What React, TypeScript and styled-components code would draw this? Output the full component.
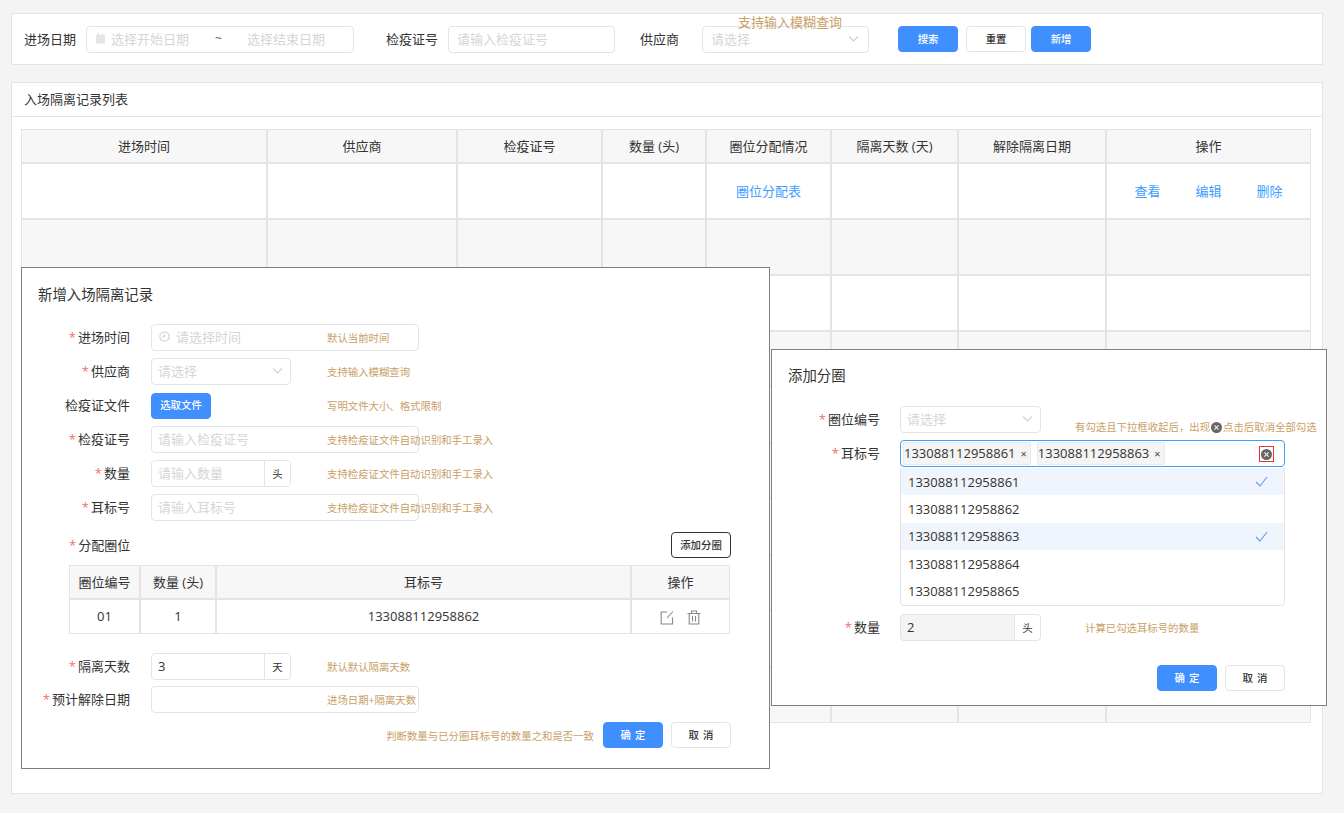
import styled, { createGlobalStyle } from "styled-components";

const GlobalStyle = createGlobalStyle`
    html, body {
        margin: 0;
        padding: 0;
        background: #f4f4f4;
    }
    * {
        box-sizing: border-box;
    }
    body {
        font-family: "Open Sans", "Noto Sans CJK SC", sans-serif;
        font-size: 13px;
        color: #333;
    }
`;

const BLUE = "#3f8fff";
const LINE = "#e4e4e4";
const HINT = "#c9a066";
const GHOST = "#d6d6d6";

const Page = styled.div`
    position: relative;
    height: 813px;
    overflow: hidden;
    padding: 13px 21px 0 11px;
`;

const FilterGroup = styled.div<{ $ml?: number }>`
    display: flex;
    align-items: center;
    gap: 10px;
    margin-left: ${(p) => p.$ml ?? 0}px;
`;

const FilterLabel = styled.span`
    padding-bottom: 2px;
    white-space: nowrap;
`;

const Box = styled.div<{ $w?: number; $disabled?: boolean; $focus?: boolean }>`
    position: relative;
    display: flex;
    align-items: center;
    flex: none;
    width: ${(p) => (p.$w ? `${p.$w}px` : "100%")};
    height: 27px;
    padding: 0 6px 2px;
    background: ${(p) => (p.$disabled ? "#f4f4f4" : "#fff")};
    border: 1px solid ${(p) => (p.$focus ? "#409eff" : LINE)};
    border-radius: 4px;
`;

const FilterCard = styled.div`
    display: flex;
    align-items: center;
    height: 52px;
    padding-left: 12px;
    background: #fff;
    border: 1px solid ${LINE};

    ${Box} {
        padding: 0 8px 2px;
    }
`;

const Placeholder = styled.span`
    color: ${GHOST};
    white-space: nowrap;
`;

const RangeText = styled(Placeholder)<{ $w: number }>`
    width: ${(p) => p.$w}px;
`;

const Tilde = styled.span`
    width: 32px;
    color: #666;
    font-size: 12px;
`;

const Chevron = styled.svg`
    margin-left: auto;
    margin-right: 1px;
    flex: none;
    width: 11px;
    height: 11px;
    fill: none;
    stroke: #d0d0d0;
    stroke-width: 1.1;
`;

const GhostIcon = styled.svg<{ $clock?: boolean }>`
    flex: none;
    width: 11px;
    height: 11px;
    margin: 0 ${(p) => (p.$clock ? 6 : 5)}px 0 ${(p) => (p.$clock ? 1 : 0)}px;
    fill: none;
    stroke: #d6d6d6;
    stroke-width: 1.2;
`;

const TopHint = styled.span`
    position: absolute;
    left: 35px;
    top: -15px;
    color: ${HINT};
    white-space: nowrap;
`;

const Buttons = styled.div`
    display: flex;
    margin-left: 29px;
`;

const Button = styled.button<{ $primary?: boolean; $dark?: boolean; $ml?: number }>`
    flex: none;
    width: 60px;
    height: 26px;
    margin-left: ${(p) => p.$ml ?? 0}px;
    padding: 0 0 2px;
    font: inherit;
    font-size: 10.4px;
    font-weight: 500;
    color: ${(p) => (p.$primary ? "#fff" : "#333")};
    background: ${(p) => (p.$primary ? BLUE : "#fff")};
    border: 1px solid ${(p) => (p.$primary ? BLUE : p.$dark ? "#333" : LINE)};
    border-radius: 4px;
`;

const ListCard = styled.div`
    height: 712px;
    margin-top: 17px;
    background: #fff;
    border: 1px solid ${LINE};
`;

const ListTitle = styled.div`
    height: 34px;
    padding-left: 12px;
    line-height: 33px;
    border-bottom: 1px solid ${LINE};
`;

const ListBody = styled.div`
    padding: 12px 11px 0 9px;
`;

const Table = styled.table`
    width: 100%;
    table-layout: fixed;
    border-collapse: separate;
    border-spacing: 0;
`;

const Th = styled.th`
    height: 34px;
    padding: 0 0 2px;
    font-weight: 400;
    text-align: center;
    background: #f7f7f7;
    border: 1px solid ${LINE};
`;

const Td = styled.td<{ $grey?: boolean; $h?: number }>`
    height: ${(p) => p.$h ?? 56}px;
    padding: 0 0 1px;
    text-align: center;
    background: ${(p) => (p.$grey ? "#f7f7f7" : "#fff")};
    border: 1px solid ${LINE};
`;

const Link = styled.span`
    color: #409eff;
`;

const LinkRow = styled.div`
    display: flex;
    justify-content: center;
    gap: 35px;
`;

const Modal = styled.div<{ $x: number; $y: number; $w: number; $h: number; $pt: number }>`
    position: absolute;
    left: ${(p) => p.$x}px;
    top: ${(p) => p.$y}px;
    width: ${(p) => p.$w}px;
    height: ${(p) => p.$h}px;
    padding-top: ${(p) => p.$pt}px;
    background: #fff;
    border: 1px solid #7f7f7f;
`;

const ModalTitle = styled.div<{ $mb: number }>`
    height: 20px;
    margin: 0 0 ${(p) => p.$mb}px 16px;
    font-size: 14.4px;
    line-height: 20px;
`;

const Field = styled.div<{ $gap?: number; $cg?: number }>`
    display: grid;
    grid-template-columns: 108px 1fr;
    column-gap: ${(p) => p.$cg ?? 21}px;
    align-items: center;
    min-height: 27px;
    margin-bottom: ${(p) => p.$gap ?? 7}px;
`;

const Label = styled.label`
    grid-area: 1 / 1;
    padding-bottom: 2px;
    text-align: right;
    white-space: nowrap;
`;

const Star = styled.span`
    margin-right: 2px;
    color: #f56c6c;
`;

const Control = styled.div`
    grid-area: 1 / 2;
    display: flex;
    align-items: center;
`;

const Hint = styled.span<{ $left?: number; $end?: boolean }>`
    grid-area: 1 / 2;
    display: flex;
    align-items: center;
    align-self: ${(p) => (p.$end ? "end" : "center")};
    margin-left: ${(p) => p.$left ?? 176}px;
    font-size: 10.4px;
    line-height: 12px;
    color: ${HINT};
    white-space: nowrap;
    z-index: 1;
`;

const Addon = styled.span`
    position: absolute;
    right: 0;
    top: 0;
    bottom: 0;
    display: flex;
    align-items: center;
    justify-content: center;
    width: 26px;
    padding-bottom: 1px;
    font-size: 10.4px;
    background: #fff;
    border-left: 1px solid ${LINE};
    border-radius: 0 4px 4px 0;
`;

const SectionHead = styled.div`
    display: flex;
    align-items: center;
    justify-content: space-between;
    margin: 11px 38px 7px 47px;
`;

const SectionLabel = styled.span`
    width: 61px;
    padding-bottom: 2px;
    white-space: nowrap;
`;

const SubTableWrap = styled.div`
    margin: 0 39px 19px 47px;
`;

const OpIcons = styled.div`
    display: flex;
    justify-content: center;
    gap: 13px;
    margin: 2px 0 0;
`;

const OpIcon = styled.svg`
    width: 14px;
    height: 15px;
    fill: none;
    stroke: #888;
    stroke-width: 1.1;
`;

const Footer = styled.div<{ $mr: number; $mt: number }>`
    display: flex;
    align-items: center;
    justify-content: flex-end;
    gap: 8px;
    margin: ${(p) => p.$mt}px ${(p) => p.$mr}px 0 0;
`;

const FooterHint = styled.span`
    margin-right: 1px;
    font-size: 10.4px;
    color: ${HINT};
    white-space: nowrap;
`;

const SpacedButton = styled(Button)`
    letter-spacing: 4px;
    text-indent: 4px;
`;

const TagBox = styled(Box)`
    gap: 6px;
    padding: 0 2px;
`;

const Tag = styled.span`
    display: flex;
    align-items: center;
    height: 23px;
    padding: 0 3px 1px 0;
    background: #f4f4f4;
    border: 1px solid #e9e9e9;
    border-radius: 2px;
    white-space: nowrap;
`;

const TagClose = styled.span`
    margin-left: 5px;
    font-size: 11px;
    color: #444;
`;

const ClearWrap = styled.span`
    position: absolute;
    right: 10px;
    top: 5px;
    display: flex;
    align-items: center;
    justify-content: center;
    width: 15px;
    height: 16px;
    border: 1px solid #e33;
`;

const ClearIcon = styled.svg`
    flex: none;
    width: 11px;
    height: 11px;
    margin: 0 1px;
`;

const Dropdown = styled.div`
    width: 385px;
    height: 138px;
    margin: -6px 0 8px 128px;
    background: #fff;
    border: 1px solid ${LINE};
    border-top: 0;
    border-radius: 0 0 4px 4px;
`;

const Option = styled.div<{ $on?: boolean }>`
    display: flex;
    align-items: center;
    justify-content: space-between;
    height: 27.3px;
    padding: 0 16px 0 7px;
    background: ${(p) => (p.$on ? "#f0f4fc" : "#fff")};
`;

const Check = styled.svg`
    width: 13px;
    height: 11px;
    fill: none;
    stroke: #5b9bf0;
    stroke-width: 1.1;
`;

const calendarIcon = (
    <GhostIcon viewBox="0 0 11 11">
        <rect x="1" y="2" width="9" height="8.5" fill="#e6e6e6" stroke="none" />
        <path d="M3.5 0.5v2M7.5 0.5v2" />
    </GhostIcon>
);

const clockIcon = (
    <GhostIcon viewBox="0 0 11 11" $clock>
        <circle cx="5.5" cy="5.5" r="4.7" />
        <path d="M5.5 3v2.7h-2" />
    </GhostIcon>
);

const chevron = (
    <Chevron viewBox="0 0 11 11">
        <path d="M1 3.5l4.5 4.5L10 3.5" />
    </Chevron>
);

const clearIcon = (
    <ClearIcon viewBox="0 0 11 11">
        <circle cx="5.5" cy="5.5" r="5.5" fill="#666" />
        <path d="M3.4 3.4l4.2 4.2M7.6 3.4l-4.2 4.2" stroke="#eee" strokeWidth="1.2" />
    </ClearIcon>
);

const columns = [246, 190, 145, 104, 125, 127, 148, 205];
const headers = ["进场时间", "供应商", "检疫证号", "数量 (头)", "圈位分配情况", "隔离天数 (天)", "解除隔离日期", "操作"];
const emptyRows = [2, 3, 4, 5, 6, 7, 8, 9, 10];
const earTags = [
    { no: "133088112958861", on: true },
    { no: "133088112958862", on: false },
    { no: "133088112958863", on: true },
    { no: "133088112958864", on: false },
    { no: "133088112958865", on: false },
];

function App() {
    return (
        <Page>
            <GlobalStyle />
            <FilterCard>
                <FilterGroup>
                    <FilterLabel>进场日期</FilterLabel>
                    <Box $w={268}>
                        {calendarIcon}
                        <RangeText $w={104}>选择开始日期</RangeText>
                        <Tilde>~</Tilde>
                        <RangeText $w={90}>选择结束日期</RangeText>
                    </Box>
                </FilterGroup>
                <FilterGroup $ml={32}>
                    <FilterLabel>检疫证号</FilterLabel>
                    <Box $w={167}>
                        <Placeholder>请输入检疫证号</Placeholder>
                    </Box>
                </FilterGroup>
                <FilterGroup $ml={25}>
                    <FilterLabel>供应商</FilterLabel>
                </FilterGroup>
                <FilterGroup $ml={23}>
                    <Box $w={167}>
                        <Placeholder>请选择</Placeholder>
                        {chevron}
                        <TopHint>支持输入模糊查询</TopHint>
                    </Box>
                </FilterGroup>
                <Buttons>
                    <Button $primary>搜索</Button>
                    <Button $ml={8}>重置</Button>
                    <Button $primary $ml={5}>新增</Button>
                </Buttons>
            </FilterCard>

            <ListCard>
                <ListTitle>入场隔离记录列表</ListTitle>
                <ListBody>
                    <Table>
                        <colgroup>
                            {columns.map((w) => (
                                <col key={w} width={w} />
                            ))}
                        </colgroup>
                        <thead>
                            <tr>
                                {headers.map((h) => (
                                    <Th key={h}>{h}</Th>
                                ))}
                            </tr>
                        </thead>
                        <tbody>
                            <tr>
                                <Td />
                                <Td />
                                <Td />
                                <Td />
                                <Td>
                                    <Link>圈位分配表</Link>
                                </Td>
                                <Td />
                                <Td />
                                <Td>
                                    <LinkRow>
                                        <Link>查看</Link>
                                        <Link>编辑</Link>
                                        <Link>删除</Link>
                                    </LinkRow>
                                </Td>
                            </tr>
                            {emptyRows.map((row) => (
                                <tr key={row}>
                                    {columns.map((w) => (
                                        <Td key={w} $grey={row % 2 === 0} />
                                    ))}
                                </tr>
                            ))}
                        </tbody>
                    </Table>
                </ListBody>
            </ListCard>

            <Modal $x={21} $y={267} $w={749} $h={502} $pt={17}>
                <ModalTitle $mb={19}>新增入场隔离记录</ModalTitle>
                <Field>
                    <Label><Star>*</Star>进场时间</Label>
                    <Control>
                        <Box $w={268}>
                            {clockIcon}
                            <Placeholder>请选择时间</Placeholder>
                        </Box>
                    </Control>
                    <Hint>默认当前时间</Hint>
                </Field>
                <Field>
                    <Label><Star>*</Star>供应商</Label>
                    <Control>
                        <Box $w={140}>
                            <Placeholder>请选择</Placeholder>
                            {chevron}
                        </Box>
                    </Control>
                    <Hint>支持输入模糊查询</Hint>
                </Field>
                <Field>
                    <Label>检疫证文件</Label>
                    <Control>
                        <Button $primary>选取文件</Button>
                    </Control>
                    <Hint>写明文件大小、格式限制</Hint>
                </Field>
                <Field>
                    <Label><Star>*</Star>检疫证号</Label>
                    <Control>
                        <Box $w={268}>
                            <Placeholder>请输入检疫证号</Placeholder>
                        </Box>
                    </Control>
                    <Hint>支持检疫证文件自动识别和手工录入</Hint>
                </Field>
                <Field>
                    <Label><Star>*</Star>数量</Label>
                    <Control>
                        <Box $w={140}>
                            <Placeholder>请输入数量</Placeholder>
                            <Addon>头</Addon>
                        </Box>
                    </Control>
                    <Hint>支持检疫证文件自动识别和手工录入</Hint>
                </Field>
                <Field $gap={0}>
                    <Label><Star>*</Star>耳标号</Label>
                    <Control>
                        <Box $w={268}>
                            <Placeholder>请输入耳标号</Placeholder>
                        </Box>
                    </Control>
                    <Hint>支持检疫证文件自动识别和手工录入</Hint>
                </Field>

                <SectionHead>
                    <SectionLabel><Star>*</Star>分配圈位</SectionLabel>
                    <Button $dark>添加分圈</Button>
                </SectionHead>
                <SubTableWrap>
                    <Table>
                        <colgroup>
                            <col width={71} />
                            <col width={76} />
                            <col width={415} />
                            <col width={99} />
                        </colgroup>
                        <thead>
                            <tr>
                                <Th>圈位编号</Th>
                                <Th>数量 (头)</Th>
                                <Th>耳标号</Th>
                                <Th>操作</Th>
                            </tr>
                        </thead>
                        <tbody>
                            <tr>
                                <Td $h={35}>01</Td>
                                <Td $h={35}>1</Td>
                                <Td $h={35}>133088112958862</Td>
                                <Td $h={35}>
                                    <OpIcons>
                                        <OpIcon viewBox="0 0 14 15">
                                            <path d="M7 2H1.2v12h11.3V7.5" />
                                            <path d="M13 1.5L7 8" />
                                        </OpIcon>
                                        <OpIcon viewBox="0 0 14 15">
                                            <path d="M0.5 3.5h13M4.5 3.2V1h5v2.2" />
                                            <path d="M2.2 3.5V14h9.6V3.5" />
                                            <path d="M5.5 6v5.5M8.5 6v5.5" />
                                        </OpIcon>
                                    </OpIcons>
                                </Td>
                            </tr>
                        </tbody>
                    </Table>
                </SubTableWrap>
                <Field $gap={6}>
                    <Label><Star>*</Star>隔离天数</Label>
                    <Control>
                        <Box $w={140}>
                            3
                            <Addon>天</Addon>
                        </Box>
                    </Control>
                    <Hint>默认默认隔离天数</Hint>
                </Field>
                <Field $gap={0}>
                    <Label><Star>*</Star>预计解除日期</Label>
                    <Control>
                        <Box $w={268} />
                    </Control>
                    <Hint>进场日期+隔离天数</Hint>
                </Field>
                <Footer $mr={38} $mt={9}>
                    <FooterHint>判断数量与已分圈耳标号的数量之和是否一致</FooterHint>
                    <SpacedButton $primary>确定</SpacedButton>
                    <SpacedButton>取消</SpacedButton>
                </Footer>
            </Modal>

            <Modal $x={771} $y={349} $w={556} $h={357} $pt={16}>
                <ModalTitle $mb={20}>添加分圈</ModalTitle>
                <Field $cg={20}>
                    <Label><Star>*</Star>圈位编号</Label>
                    <Control>
                        <Box $w={141}>
                            <Placeholder>请选择</Placeholder>
                            {chevron}
                        </Box>
                    </Control>
                    <Hint $left={175} $end>
                        有勾选且下拉框收起后，出现{clearIcon}点击后取消全部勾选
                    </Hint>
                </Field>
                <Field $cg={20}>
                    <Label><Star>*</Star>耳标号</Label>
                    <Control>
                        <TagBox $w={385} $focus>
                            <Tag>133088112958861<TagClose>×</TagClose></Tag>
                            <Tag>133088112958863<TagClose>×</TagClose></Tag>
                            <ClearWrap>{clearIcon}</ClearWrap>
                        </TagBox>
                    </Control>
                </Field>
                <Dropdown>
                    {earTags.map((t) => (
                        <Option key={t.no} $on={t.on}>
                            {t.no}
                            {t.on && (
                                <Check viewBox="0 0 13 11">
                                    <path d="M1 6l4 4 7-9" />
                                </Check>
                            )}
                        </Option>
                    ))}
                </Dropdown>
                <Field $gap={0} $cg={20}>
                    <Label><Star>*</Star>数量</Label>
                    <Control>
                        <Box $w={141} $disabled>
                            2
                            <Addon>头</Addon>
                        </Box>
                    </Control>
                    <Hint $left={185}>计算已勾选耳标号的数量</Hint>
                </Field>
                <Footer $mr={41} $mt={24}>
                    <SpacedButton $primary>确定</SpacedButton>
                    <SpacedButton>取消</SpacedButton>
                </Footer>
            </Modal>
        </Page>
    );
}

export default App;
